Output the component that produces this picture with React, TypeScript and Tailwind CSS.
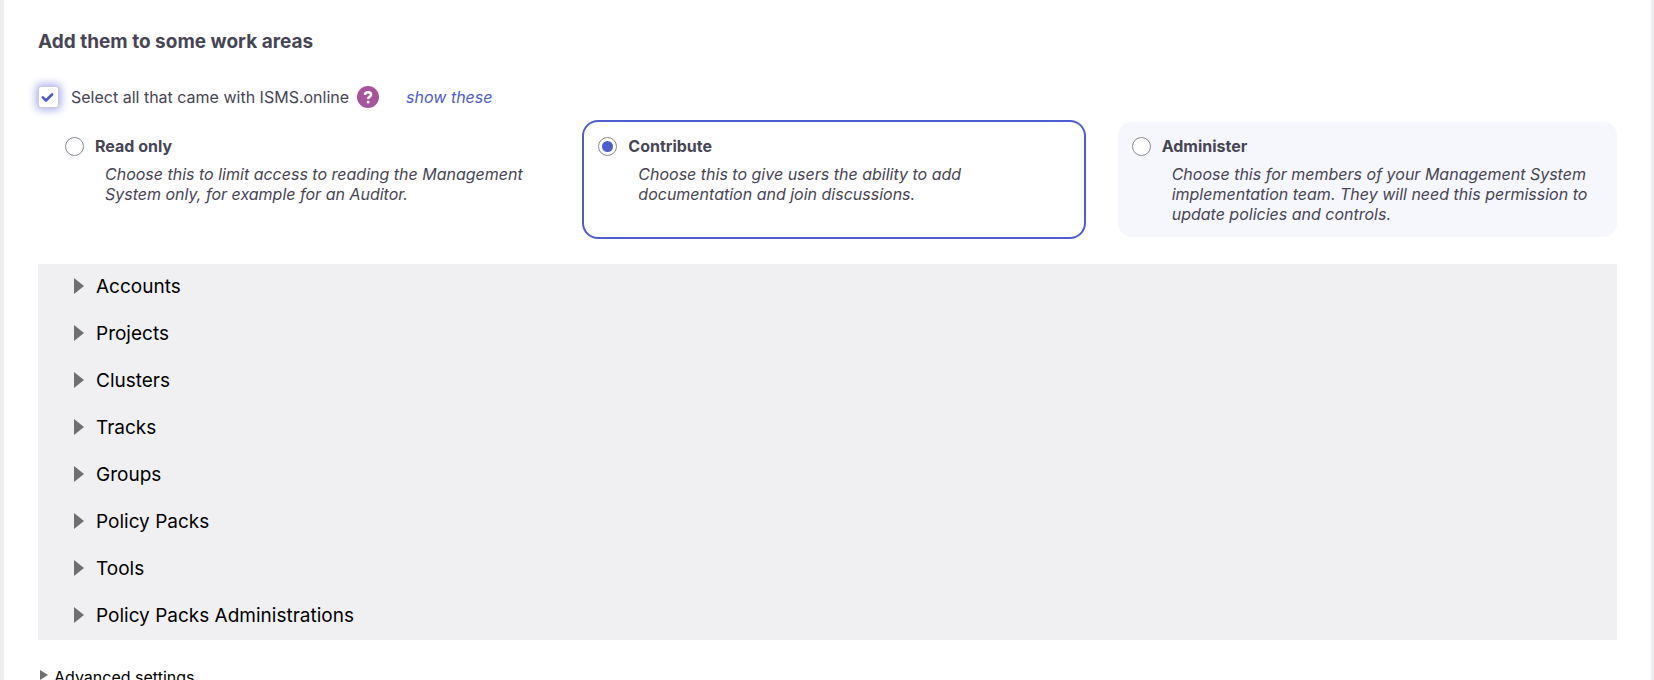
import React, { useState } from 'react';

const ROLES = [
    {
        id: 'read',
        title: 'Read only',
        text: 'Choose this to limit access to reading the Management System only, for example for an Auditor.',
        tone: 'bg-white',
    },
    {
        id: 'contribute',
        title: 'Contribute',
        text: 'Choose this to give users the ability to add documentation and join discussions.',
        tone: 'bg-white',
    },
    {
        id: 'administer',
        title: 'Administer',
        text: 'Choose this for members of your Management System implementation team. They will need this permission to update policies and controls.',
        tone: 'bg-[#f6f7fd]',
    },
];

const AREAS = [
    'Accounts',
    'Projects',
    'Clusters',
    'Tracks',
    'Groups',
    'Policy Packs',
    'Tools',
    'Policy Packs Administrations',
];

function Triangle({ className }: { className: string }) {
    return (
        <svg viewBox="0 0 10 16" preserveAspectRatio="none" className={className} aria-hidden="true">
            <path d="M0 0L10 8L0 16Z" fill="#6f6f6f" />
        </svg>
    );
}

export default function App() {
    const [selectAll, setSelectAll] = useState(true);
    const [role, setRole] = useState('contribute');

    return (
        <div className="h-screen overflow-hidden border-l-4 border-r-3 border-[#eeeef0] bg-white px-[34px] pt-7 font-['Inter','Liberation_Sans',sans-serif] text-base text-[#474554]">
            <h2 className="text-[19px] leading-7 font-bold">Add them to some work areas</h2>

            <div className="mt-[27px] flex h-7 items-center">
                <label className="flex items-center gap-3">
                    <span className="relative flex h-[22px] w-[21px]">
                        <input
                            type="checkbox"
                            checked={selectAll}
                            onChange={e => setSelectAll(e.target.checked)}
                            className="h-[22px] w-[21px] appearance-none rounded-[3px] border border-[#c9c9d6] bg-white shadow-[0_0_8px_2px_#a9adf0]"
                        />
                        {selectAll && (
                            <svg viewBox="0 0 21 22" className="pointer-events-none absolute inset-0 h-[22px] w-[21px]" aria-hidden="true">
                                <path d="M4.8 11.4L8 14.5L14 8.5" fill="none" stroke="#4f5dcf" strokeWidth="2.6" strokeLinecap="round" strokeLinejoin="round" />
                            </svg>
                        )}
                    </span>
                    <span>Select all that came with ISMS.online</span>
                </label>
                <button type="button" aria-label="Help" className="ml-2 size-[22px]">
                    <svg viewBox="0 0 22 22" className="size-[22px]">
                        <circle cx="11" cy="11" r="11" fill="#a8549b" />
                        <path d="M7.9 8.8C8.1 7 9.4 6.2 11 6.2C12.8 6.2 14.1 7.1 14.1 8.7C14.1 10.7 11.2 10.5 11.2 12.9" fill="none" stroke="#fff" strokeWidth="2.5" />
                        <circle cx="11.1" cy="15.9" r="1.5" fill="#fff" />
                    </svg>
                </button>
                <a href="#areas" className="ml-[27px] italic text-[#4f5dcf]">show these</a>
            </div>

            <div className="mt-[11px] grid grid-cols-3 gap-[34px] pl-[13px]">
                {ROLES.map(r => (
                    <label
                        key={r.id}
                        className={`block min-h-[115px] rounded-[14px] pt-[14px] pr-4 pl-[14px] ${r.tone} ${role === r.id ? 'ring-2 ring-[#4f5dcf]' : ''}`}
                    >
                        <span className="flex items-center gap-[11px]">
                            <span className="relative flex size-[19px]">
                                <input
                                    type="radio"
                                    name="role"
                                    checked={role === r.id}
                                    onChange={() => setRole(r.id)}
                                    className="size-[19px] appearance-none rounded-full border border-[#8a8896] bg-white"
                                />
                                {role === r.id && (
                                    <span className="pointer-events-none absolute top-1 left-1 size-[11px] rounded-full bg-[#4f5dcf]" />
                                )}
                            </span>
                            <span className="leading-5 font-bold">{r.title}</span>
                        </span>
                        <span className="mt-2 block pl-10 leading-5 italic">{r.text}</span>
                    </label>
                ))}
            </div>

            <ul id="areas" className="mt-[27px] bg-[#f0f0f3] pl-9 text-[19px] text-black">
                {AREAS.map(a => (
                    <li key={a} className="h-[47px] pt-[9px]">
                        <button type="button" className="flex items-center gap-3 leading-7">
                            <Triangle className="mb-0.5 h-4 w-[10px]" />
                            {a}
                        </button>
                    </li>
                ))}
            </ul>

            <button type="button" className="mt-[25px] ml-0.5 flex items-center gap-[6px] text-black">
                <Triangle className="mb-1 h-[10px] w-2" />
                Advanced settings
            </button>
        </div>
    );
}
